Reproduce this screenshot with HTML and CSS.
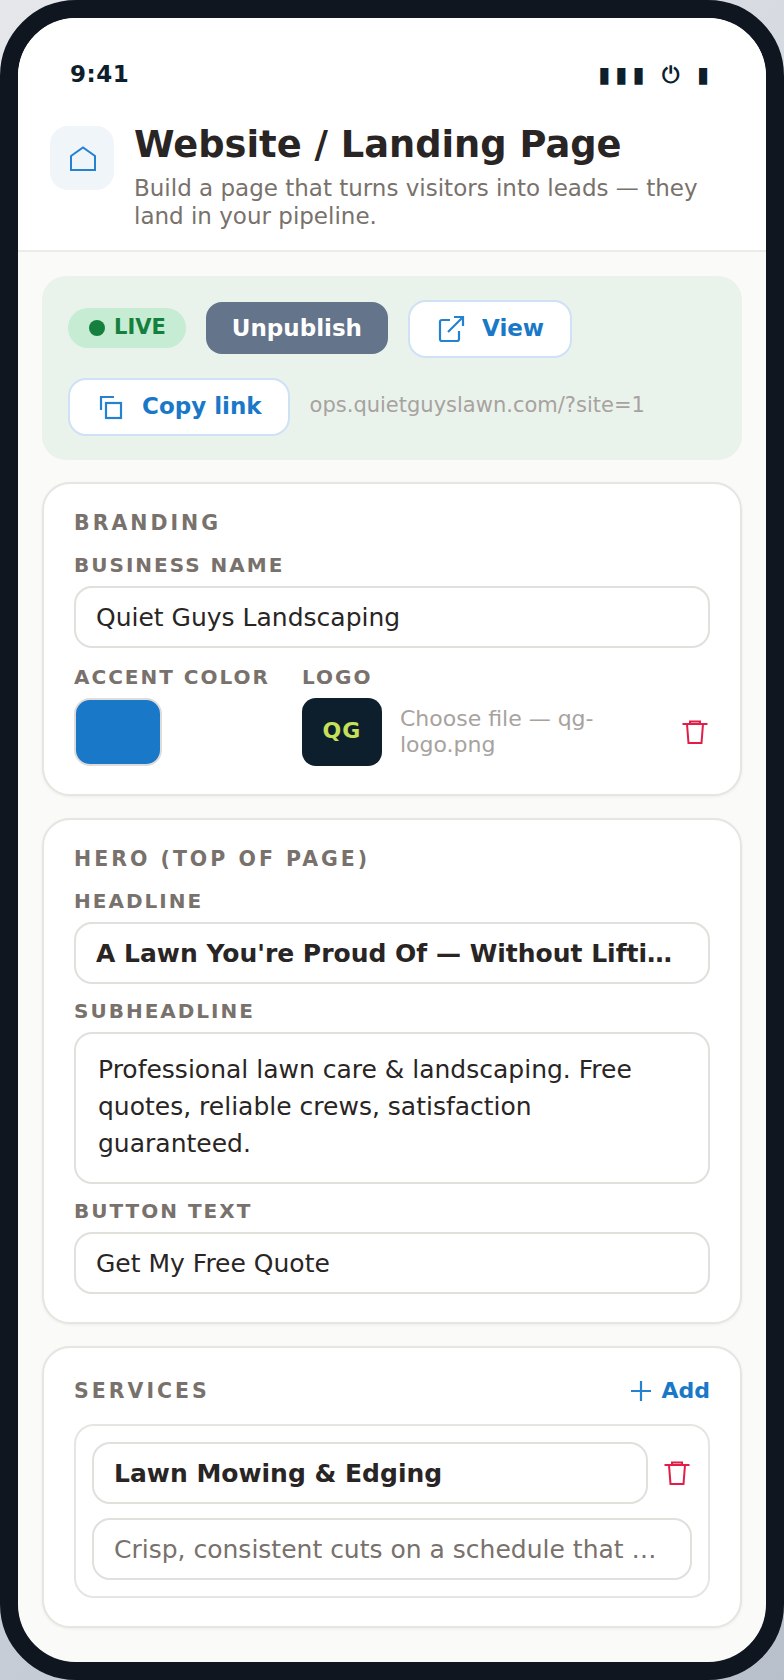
FILE: index.html
```html
<!DOCTYPE html>
<html lang="en">
<head>
  <meta charset="UTF-8">
  <meta name="viewport" content="width=device-width, initial-scale=1.0">
  <title>Website / Landing Page</title>
  <link rel="stylesheet" href="styles.css">
</head>
<body>
  <div class="phone">
    <div class="screen">
      <div class="status-bar">
        <span class="clock">9:41</span>
        <span class="status-icons">▮▮▮ ⏻ ▮</span>
      </div>

      <header class="page-header">
        <div class="page-icon">
          <svg width="32" height="32" viewBox="0 0 32 32" fill="none" stroke="#2582d0" stroke-width="2"><path d="M5 14 17 5.500 29 14V28H5z"/></svg>
        </div>
        <div>
          <h1>Website / Landing Page</h1>
          <p class="page-sub">Build a page that turns visitors into leads — they land in your pipeline.</p>
        </div>
      </header>

      <main class="content">
        <section class="publish-bar">
          <span class="live-pill"><i class="live-dot"></i>LIVE</span>
          <button class="button button-muted">Unpublish</button>
          <button class="button button-outline">
            <svg width="28" height="28" viewBox="0 0 28 28" fill="none" stroke="#2582d0" stroke-width="2.2"><path d="M13 5H5a2 2 0 0 0-2 2v17a2 2 0 0 0 2 2h15a2 2 0 0 0 2-2v-8"/><path d="M17 2h9v9M26 2 11 17"/></svg>
            <span>View</span>
          </button>
          <button class="button button-outline button-copy">
            <svg width="26" height="26" viewBox="0 0 26 26" fill="none" stroke="#2582d0" stroke-width="2.2"><path d="M3 16V3h13"/><rect x="8" y="9" width="15" height="15"/></svg>
            <span>Copy link</span>
          </button>
          <span class="site-url">ops.quietguyslawn.com/?site=1</span>
        </section>

        <section class="card">
          <h2 class="card-title">BRANDING</h2>
          <label class="field-label">BUSINESS NAME</label>
          <div class="field">Quiet Guys Landscaping</div>
          <div class="brand-row">
            <div class="brand-accent">
              <label class="field-label">ACCENT COLOR</label>
              <div class="swatch"></div>
            </div>
            <div class="brand-logo">
              <label class="field-label">LOGO</label>
              <div class="logo-row">
                <div class="logo-thumb">QG</div>
                <span class="file-name">Choose file — qg-logo.png</span>
                <svg class="trash" width="26" height="26" viewBox="0 0 26 26" fill="none" stroke="#e11d48" stroke-width="2"><path d="M.5 5h25M8 4.5v-2h10v2M5 5l1.500 19h13L21 5"/></svg>
              </div>
            </div>
          </div>
        </section>

        <section class="card">
          <h2 class="card-title">HERO (TOP OF PAGE)</h2>
          <label class="field-label">HEADLINE</label>
          <div class="field field-bold">A Lawn You're Proud Of — Without Lifti…</div>
          <label class="field-label field-label-next">SUBHEADLINE</label>
          <div class="field field-area">Professional lawn care &amp; landscaping. Free quotes, reliable crews, satisfaction guaranteed.</div>
          <label class="field-label field-label-next">BUTTON TEXT</label>
          <div class="field">Get My Free Quote</div>
        </section>

        <section class="card">
          <div class="card-head">
            <h2 class="card-title">SERVICES</h2>
            <span class="add-link">
              <svg width="20" height="20" viewBox="0 0 20 20" fill="none" stroke="#2582d0" stroke-width="2.2"><path d="M10 0v20M0 10h20"/></svg>
              <span class="add-text">Add</span>
            </span>
          </div>
          <div class="service">
            <div class="service-top">
              <div class="field field-bold">Lawn Mowing &amp; Edging</div>
              <svg class="trash" width="26" height="26" viewBox="0 0 26 26" fill="none" stroke="#e11d48" stroke-width="2"><path d="M.5 5h25M8 4.5v-2h10v2M5 5l1.500 19h13L21 5"/></svg>
            </div>
            <div class="field field-muted">Crisp, consistent cuts on a schedule that …</div>
          </div>
        </section>
      </main>
    </div>
  </div>
</body>
</html>
```

FILE: styles.css
```css
* {
  box-sizing: border-box;
}
body {
  margin: 0;
  width: 784px;
  height: 1680px;
  overflow: hidden;
  font-family: 'DejaVu Sans', sans-serif;
  background: linear-gradient(135deg, #e5e7eb, #b8c0cc);
  color: #292524;
}
.phone {
  width: 784px;
  height: 1680px;
  border: 18px solid #10161f;
  border-radius: 76px;
  overflow: hidden;
}
.screen {
  height: 100%;
  background-color: #fafaf8;
  border-radius: 58px;
  overflow: hidden;
}
.status-bar {
  display: flex;
  justify-content: space-between;
  align-items: center;
  background-color: white;
  padding: 20px 52px 0 52px;
  height: 92px;
  color: #0d1f2d;
}
.clock {
  font-size: 23px;
  font-weight: 700;
  letter-spacing: 0.5px;
}
.status-icons {
  font-size: 22px;
  font-weight: 700;
  letter-spacing: 5px;
}
.page-header {
  display: flex;
  gap: 20px;
  background-color: white;
  padding: 16px 32px 20px;
  border-bottom: 2px solid #ecebe8;
  height: 142px;
}
.page-icon {
  flex: none;
  display: flex;
  justify-content: center;
  align-items: center;
  width: 64px;
  height: 64px;
  background-color: #f0f5fa;
  border-radius: 18px;
}
h1 {
  margin: -3px 0 0;
  font-size: 36.8px;
  line-height: 44px;
  font-weight: 700;
}
.page-sub {
  margin: 7px 0 0;
  font-size: 23px;
  line-height: 28px;
  color: #78716c;
}
.content {
  display: flex;
  flex-direction: column;
  gap: 22px;
  padding: 24px 24px 36px;
}
.publish-bar {
  display: flex;
  flex-wrap: wrap;
  align-items: center;
  gap: 20px;
  height: 184px;
  padding: 24px 26px;
  background-color: #e9f3ec;
  border-radius: 24px;
}
.live-pill {
  display: inline-flex;
  align-items: center;
  gap: 9px;
  height: 40px;
  margin-bottom: 2px;
  padding: 0 20px 2px 21px;
  background-color: #c6ecd3;
  border-radius: 20px;
  color: #15803d;
  font-size: 21px;
  font-weight: 700;
}
.live-dot {
  width: 16px;
  height: 16px;
  margin-top: 2px;
  background-color: #15803d;
  border-radius: 50%;
}
.button {
  display: inline-flex;
  align-items: center;
  gap: 17px;
  font-family: inherit;
  font-size: 23px;
  font-weight: 700;
  border: none;
}
.button-muted {
  height: 52px;
  margin-bottom: 2px;
  padding: 0 26px;
  background-color: #64748b;
  border-radius: 16px;
  color: white;
}
.button-outline {
  height: 58px;
  padding: 0 26px 2px 27px;
  background-color: white;
  border: 2px solid #cfe1f5;
  border-radius: 18px;
  color: #1a78c8;
}
.button-outline svg {
  margin-top: 2px;
}
.button-copy {
  gap: 18px;
  padding-left: 28px;
}
.site-url {
  margin-bottom: 4px;
  font-size: 21px;
  color: #a8a29e;
}
.card {
  padding: 26px 30px 28px;
  background-color: white;
  border: 2px solid #e7e5e1;
  border-radius: 28px;
  box-shadow: 0 1px 3px rgba(0, 0, 0, 0.06);
}
.card-title {
  margin: 0 0 17px;
  font-size: 20.5px;
  line-height: 26px;
  font-weight: 700;
  letter-spacing: 3px;
  color: #78716c;
}
.field-label {
  display: block;
  margin-bottom: 9px;
  font-size: 20px;
  line-height: 24px;
  font-weight: 700;
  letter-spacing: 2px;
  color: #78716c;
}
.field-label-next {
  margin-top: 15px;
}
.field {
  width: 100%;
  height: 62px;
  padding: 0 20px;
  background-color: white;
  border: 2px solid #e2e0db;
  border-radius: 18px;
  font-size: 25px;
  line-height: 60px;
  white-space: nowrap;
}
.field-bold {
  font-weight: 700;
}
.field-muted {
  color: #78716c;
}
.field-area {
  height: 152px;
  padding: 17px 22px;
  line-height: 37px;
  white-space: normal;
}
.brand-row {
  display: flex;
  gap: 32px;
  margin-top: 17px;
}
.brand-accent {
  flex: none;
}
.brand-logo {
  flex: 1;
}
.swatch {
  width: 88px;
  height: 68px;
  background-color: #1a78c8;
  border: 2px solid #dedcd8;
  border-radius: 16px;
}
.logo-row {
  display: flex;
  align-items: center;
  gap: 18px;
}
.logo-thumb {
  flex: none;
  display: flex;
  justify-content: center;
  align-items: center;
  width: 80px;
  height: 68px;
  padding-bottom: 3px;
  background-color: #0d1f2d;
  border-radius: 14px;
  color: #c6e05a;
  font-size: 22px;
  font-weight: 700;
  letter-spacing: 1px;
}
.file-name {
  flex: 1;
  font-size: 22px;
  line-height: 26px;
  color: #a8a29e;
}
.trash {
  flex: none;
  margin-right: 2px;
}
.card-head {
  display: flex;
  justify-content: space-between;
  align-items: center;
  height: 34px;
  margin-bottom: 16px;
}
.card-head .card-title {
  margin: 0;
}
.add-link {
  display: inline-flex;
  align-items: center;
  gap: 10px;
  color: #1a78c8;
  font-size: 22px;
  font-weight: 700;
}
.add-text {
  margin-bottom: 2px;
}
.service {
  display: flex;
  flex-direction: column;
  gap: 14px;
  padding: 16px;
  border: 2px solid #e7e5e1;
  border-radius: 20px;
}
.service-top {
  display: flex;
  align-items: center;
  gap: 16px;
}
```
